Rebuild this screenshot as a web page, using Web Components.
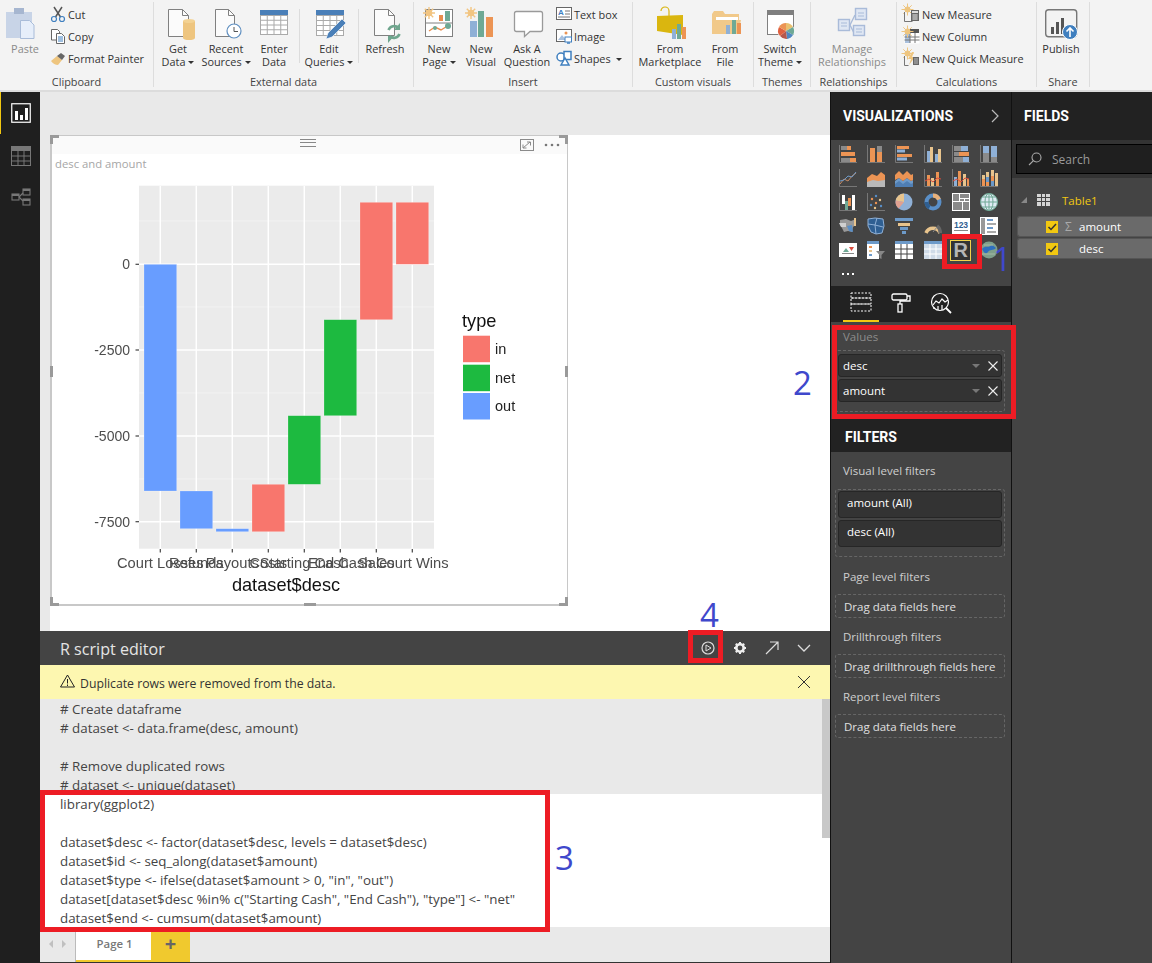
<!DOCTYPE html>
<html><head><meta charset="utf-8"><title>Power BI</title>
<style>
html,body{margin:0;padding:0;width:1152px;height:963px;overflow:hidden;background:#fff}
body{font-family:"Open Sans","Noto Sans",sans-serif}
</style></head>
<body>
<pbi-app>
  <pbi-ribbon slot="ribbon">
    <rb-group label="Clipboard" style="width:153px">
      <rb-big icon="paste" w="50" class="dis">Paste</rb-big>
      <rb-col>
        <rb-small icon="cut">Cut</rb-small>
        <rb-small icon="copy">Copy</rb-small>
        <rb-small icon="painter">Format Painter</rb-small>
      </rb-col>
    </rb-group>
    <rb-group label="External data" style="width:259px">
      <rb-big icon="getdata" w="48" caret>Get<br>Data</rb-big>
      <rb-big icon="recent" w="48" caret>Recent<br>Sources</rb-big>
      <rb-big icon="enter" w="48">Enter<br>Data</rb-big>
      <rb-sep></rb-sep>
      <rb-big icon="edit" w="56" caret>Edit<br>Queries</rb-big>
      <rb-sep></rb-sep>
      <rb-big icon="refresh" w="50">Refresh</rb-big>
    </rb-group>
    <rb-group label="Insert" style="width:218px">
      <rb-big icon="newpage" w="50" caret>New<br>Page</rb-big>
      <rb-big icon="newvisual" w="34">New<br>Visual</rb-big>
      <rb-big icon="ask" w="58">Ask A<br>Question</rb-big>
      <rb-col>
        <rb-small icon="textbox">Text box</rb-small>
        <rb-small icon="image">Image</rb-small>
        <rb-small icon="shapes" caret>Shapes</rb-small>
      </rb-col>
    </rb-group>
    <rb-group label="Custom visuals" style="width:120px">
      <rb-big icon="market" w="74">From<br>Marketplace</rb-big>
      <rb-big icon="file" w="36">From<br>File</rb-big>
    </rb-group>
    <rb-group label="Themes" style="width:56px">
      <rb-big icon="theme" w="52" caret>Switch<br>Theme</rb-big>
    </rb-group>
    <rb-group label="Relationships" style="width:85px">
      <rb-big icon="manage" w="82" class="dis">Manage<br>Relationships</rb-big>
    </rb-group>
    <rb-group label="Calculations" style="width:139px">
      <rb-col style="margin-left:7px">
        <rb-small icon="measure">New Measure</rb-small>
        <rb-small icon="column">New Column</rb-small>
        <rb-small icon="quick">New Quick Measure</rb-small>
      </rb-col>
    </rb-group>
    <rb-group label="Share" style="width:52px">
      <rb-big icon="publish" w="48">Publish</rb-big>
    </rb-group>
  </pbi-ribbon>
  <pbi-nav slot="nav"></pbi-nav>
  <pbi-center slot="center">
    <pbi-page>
      <r-visual title-text="desc and amount"></r-visual>
    </pbi-page>
    <r-editor></r-editor>
    <pbi-tabs></pbi-tabs>
  </pbi-center>
  <pbi-viz slot="viz"></pbi-viz>
  <pbi-fields slot="fields"></pbi-fields>
  <pbi-mark slot="over" x="942" y="234" w="40" h="35"></pbi-mark>
  <pbi-mark slot="over" x="832" y="325" w="184" h="94"></pbi-mark>
  <pbi-mark slot="over" x="40" y="790" w="510" h="142"></pbi-mark>
  <pbi-mark slot="over" x="688" y="630" w="35" h="33"></pbi-mark>
  <pbi-num slot="over" x="993" y="237">1</pbi-num>
  <pbi-num slot="over" x="793" y="361">2</pbi-num>
  <pbi-num slot="over" x="555" y="836">3</pbi-num>
  <pbi-num slot="over" x="700" y="593">4</pbi-num>
</pbi-app>
<script>
const sun=(x,y,c='#f2c582')=>`<g stroke="${c}" stroke-width="1.4" fill="none"><circle cx="${x}" cy="${y}" r="2.6" fill="${c}"/><path d="M${x} ${y-6}v12M${x-6} ${y}h12M${x-4.2} ${y-4.2}l8.4 8.4M${x-4.2} ${y+4.2}l8.4-8.4"/></g>`;
const R=(x,y,w,h,c)=>`<rect x="${x}" y="${y}" width="${w}" height="${h}" fill="${c}"/>`;
const page=(a,b,t,c)=>`<path d="M${a+.5} ${t+.5}h${b-a-7}l6 6v${c-t-7}H${a+.5}z" fill="#fbfbfb" stroke="#808080"/><path d="M${b-6.5} ${t+.5}v6h6" fill="none" stroke="#808080"/>`;
const tbl=(x,y,w,h,n,m)=>{let s=R(x,y,w,h,'#fff')+R(x,y,w,5,'#4a7fb8');for(let i=0;i<=n;i++){const px=x+.5+i*(w-1)/n;s+=`<path d="M${px} ${y+5}V${y+h}" stroke="#aaa"/>`}for(let j=0;j<=m;j++){const py=y+5.5+j*(h-6)/m;s+=`<path d="M${x} ${py}H${x+w}" stroke="#aaa"/>`}return s};
const BIG={
paste:`<path d="M1 5h9V2.5h8V5h9v26H1z" fill="#c8d4e7"/><rect x="9" y="1" width="10" height="6" fill="#a6b6d0"/><path d="M15.5 13.5h9l4.5 4.5v13.5H15.5z" fill="#e6eefa" stroke="#a9bcd9"/>`,
getdata:page(10,31,2,30)+R(25,14,12,17,'#eec57f')+`<ellipse cx="31" cy="14" rx="6" ry="2" fill="#f3d293"/><ellipse cx="31" cy="31" rx="6" ry="2" fill="#eec57f"/>`,
recent:page(9,29,2,30)+`<circle cx="28" cy="24" r="7" fill="#fff" stroke="#5f8fc0" stroke-width="1.2"/><path d="M28 20v4.5h4" fill="none" stroke="#555"/>`,
enter:tbl(6,3,28,25,4,4),
edit:tbl(7,3,28,26,4,4)+`<path d="M19 26l14-14 4 4-14 14-6 2z" fill="#4a7fb8" stroke="#fff" stroke-width=".6"/>`,
refresh:page(9,30,2,29)+`<g fill="none" stroke="#6fa68e" stroke-width="2.6"><path d="M23.5 23a6 6 0 0 1 10-2"/><path d="M34.5 27a6 6 0 0 1-10 2"/></g><path d="M35 16v7h-6zM23 36v-7h6z" fill="#6fa68e"/>`,
newpage:R(6.5,2.5,27,27,'#fff').replace('/>',' stroke="#808080"/>')+`<path d="M6 16h28" stroke="#808080"/>`+R(20,8,4,6,'#e98d4e')+R(26,4,5,10,'#6fa995')+`<path d="M10 24l6-4 6 3 8-5" fill="none" stroke="#e98d4e" stroke-width="1.4"/><circle cx="16" cy="21" r="2" fill="#6fa995"/><circle cx="29" cy="19" r="3" fill="#6fa995"/>`+sun(10,6),
newvisual:sun(10,6)+R(9,14,7,16,'#8fb0d6')+R(17,4,6,26,'#6fa995')+R(25,10,7,20,'#ec9454'),
ask:`<path d="M9.5 4.5h24a2 2 0 0 1 2 2v16a2 2 0 0 1-2 2H23l-5.5 5v-5H9.5a2 2 0 0 1-2-2v-16a2 2 0 0 1 2-2z" fill="#fff" stroke="#9a9a9a" stroke-width="1.3"/>`,
market:`<path d="M11 4a4 4 0 0 1 8 0v5" fill="none" stroke="#d9b50f" stroke-width="1.2"/><path d="M7 9l26-1v20l-26-4z" fill="#dab60f"/>`+R(22,22,4,10,'#8fb0d6')+R(27,17,4,15,'#6fa995')+R(32,20,4,12,'#ec9454'),
file:`<path d="M7 7l2-3h9l2 3h14v6l2 0-3 14H7z" fill="#f1c98a"/><path d="M11 10h22v3H11z" fill="#fff"/>`+R(21,18,4,9,'#8fb0d6')+R(27,13,4,14,'#6fa995')+R(32,16,4,11,'#ec9454'),
theme:R(7.5,3.5,26,24,'#fff').replace('/>',' stroke="#808080"/>')+R(7,3,27,5,'#7f7f7f')+`<circle cx="26" cy="24" r="8.5" fill="#fff"/><path d="M26 24V16a8 8 0 0 1 7 4z" fill="#e9c06f"/><path d="M26 24l7-4a8 8 0 0 1 0 8z" fill="#6fa995"/><path d="M26 24l7 4a8 8 0 0 1-6 4z" fill="#4f86c0"/><path d="M26 24l1 8a8 8 0 0 1-7-3z" fill="#b5574c"/><path d="M26 24l-6 5a8 8 0 0 1-1-9z" fill="#e0603f"/><path d="M26 24l-7-4a8 8 0 0 1 7-4z" fill="#ec9454"/>`,
manage:`<g fill="#dfe7f3" stroke="#a9bbd9" stroke-width="1.4"><path d="M18 18l5-10M18 18l4 8" fill="none"/><rect x="23.5" y="1.5" width="11" height="11"/><rect x="6.5" y="12.5" width="11" height="11"/><rect x="21.5" y="18.5" width="11" height="10"/></g><path d="M26 6h6M26 9h6M9 16h6M9 19h6M24 22h6M24 25h6" stroke="#a9bbd9"/>`,
publish:`<rect x="4.7" y="2.7" width="31" height="27" rx="3" fill="none" stroke="#777" stroke-width="1.4"/><g fill="#555">${R(10,20,3,7,'#555')}${R(15,15,3,12,'#555')}${R(20,11,3,16,'#555')}</g><circle cx="29" cy="25" r="7.5" fill="#3f7fbf" stroke="#fff"/><path d="M29 30v-9M25.5 24.5l3.5-3.5 3.5 3.5" fill="none" stroke="#fff" stroke-width="1.6"/>`
};
const sm=(x,y)=>sun(x,y,'#eec57f').replace(/stroke-width="1.4"/,'stroke-width="1"');
const SMALL={
cut:`<g fill="none"><path d="M4 1l6.5 10M12 1L5.5 11" stroke="#555" stroke-width="1.5"/><circle cx="4" cy="13" r="2.5" stroke="#3f7fbf" stroke-width="1.2"/><circle cx="12" cy="13" r="2.5" stroke="#3f7fbf" stroke-width="1.2"/></g>`,
copy:`<path d="M1.5 1.5h6l2 2V12h-8z" fill="#fff" stroke="#666"/><path d="M6.5 5.5h5l3 3v7h-8z" fill="#fff" stroke="#666"/><path d="M8 9h5M8 11h5M8 13h5" stroke="#3f7fbf"/>`,
painter:`<path d="M1 11l6-5 5 4-4 5q-4 0-7-4z" fill="#eec57f"/><path d="M7 6l5 4 3-4-4-3z" fill="#666"/>`,
textbox:`<rect x=".5" y="1.5" width="15" height="12" fill="#fff" stroke="#666"/><text x="2" y="9" font-family="Liberation Sans" font-size="8" font-weight="700" fill="#3f7fbf">A</text><path d="M9 5h5M9 8h5M2 11h12" stroke="#777"/>`,
image:`<rect x=".5" y="1.5" width="15" height="12" fill="#fff" stroke="#666"/><path d="M2 12l4-5 4 5z" fill="#a9c0de"/><circle cx="10" cy="5" r="1.5" fill="#ec9454"/><rect x="9" y="9" width="6.5" height="5" fill="#fff" stroke="#3f7fbf"/><path d="M11 15h3" stroke="#3f7fbf" stroke-width="1.5"/>`,
shapes:`<g fill="#fff" stroke="#3f7fbf" stroke-width="1.5"><circle cx="5" cy="7" r="4"/><rect x="8" y="1.5" width="7" height="8"/><path d="M5 15l4-7 4 7z"/></g>`,
measure:`${sm(3.5,3.5)}<path d="M.5 6v9.5h8" fill="none" stroke="#777"/>${R(7,4,8,11,'#666')}${R(8,5,6,2,'#ddd')}<path d="M8 9h6M8 11h6M8 13h6M10 8v6M12 8v6" stroke="#ddd" stroke-width=".7"/>`,
column:`${R(.5,5,15,10.5,'#fff')}${R(1,5,5,10,'#a9c0de')}${R(6,1,9,4,'#555')}<path d="M.5 9h15M.5 12h15M6 5v10M11 5v10" stroke="#777" fill="none"/>${sm(3.5,3.5)}`,
quick:`${sm(3.5,3.5)}<path d="M.5 6v9.5h4" fill="none" stroke="#777"/><path d="M8 2L4 9h3l-2 6 6-8H8l2-5z" fill="#eec57f"/>${R(9,7,6,8,'#666')}<path d="M10 9h4M10 11h4M10 13h4" stroke="#ddd" stroke-width=".7"/>`
};
const O='#ec9454',B='#8fb0d6',S='#e8c48d',G='#8a8a8a',W='#fff',D='#6d9ac9',T='#6fa995',A='#5a8fc7';
const ax=`<path d="M.5 0v17.5H18" fill="none" stroke="#777"/>`;
const VIZ=[
ax+R(2,1,6,4,G)+R(8,1,4,4,O)+R(2,7,6,4,O)+R(8,7,8,4,O)+R(2,13,9,4,G)+R(11,13,6,4,O),
ax+R(3,7,5,10,O)+R(3,3,5,4,O)+R(10,1,5,6,G)+R(10,7,5,10,O),
ax+R(2,1,12,3,O)+R(2,4.5,8,3,B)+R(2,9,15,3,O)+R(2,12.5,10,3,B),
ax+R(3,6,3,11,B)+R(6,2,3,15,S)+R(11,9,3,8,B)+R(14,4,3,13,S),
ax+R(2,1,7,5,G)+R(9,1,7,5,B)+R(2,7,5,4,G)+R(7,7,10,4,O)+R(2,12,9,5,G)+R(11,12,6,5,B),
ax+R(3,1,6,7,B)+R(3,8,6,9,G)+R(11,1,6,11,B)+R(11,12,6,5,G),
ax+`<path d="M1 15l4-5 4 2 4-5 4-3" fill="none" stroke="#c98a60"/><path d="M1 12l4-1 4-4 4 1 4-5" fill="none" stroke="#6d9ac9"/>`,
`<path d="M0 18V9l5-4 5 2 4-4 4 3v12z" fill="${O}"/><path d="M0 18v-5l6-2 5 1 7-1v7z" fill="#b9b9b9"/>`,
`<path d="M0 18V12l4-3 4 3 4-3 4 3 2-1v7z" fill="${D}"/><path d="M0 11V6l4-4 4 4 4-4 4 4 2-1v6l-2 1-4-3-4 3-4-3z" fill="${O}"/><path d="M0 15l4-3 4 3 4-3 4 3 2-1v4H0z" fill="#4f7eb3"/>`,
ax+R(3,6,3,11,O)+R(7,9,3,8,S)+R(12,3,3,14,O)+`<path d="M1 12l4-2 4 3 4-4 4 1" fill="none" stroke="#d94c3d"/>`,
ax+R(2,8,3,9,B)+R(6,2,3,15,O)+R(11,5,3,12,S)+R(15,10,2,7,O)+`<path d="M1 12l4-2 4 3 4-4 4 1" fill="none" stroke="#d94c3d"/>`,
ax+R(2,6,3,4,S)+R(2,10,3,7,O)+R(6,3,3,5,S)+R(6,8,3,5,D)+R(6,13,3,4,O)+R(11,1,3,6,S)+R(11,7,3,5,O)+R(11,12,3,5,D)+R(15,4,3,13,S),
ax+R(3,2,3,9,W)+R(6,8,3,9,T)+R(9,5,3,8,O)+R(13,2,3,15,W),
ax+`<g fill="#c98a60"><circle cx="5" cy="6" r="1.2" fill="${O}"/><circle cx="9" cy="3" r="1.2" fill="${A}"/><circle cx="4" cy="12" r="1.2" fill="${A}"/><circle cx="9" cy="10" r="1.2" fill="${O}"/><circle cx="13" cy="7" r="1.2" fill="${S}"/><circle cx="14" cy="13" r="1.2" fill="${A}"/><circle cx="8" cy="15" r="1.2" fill="${S}"/></g>`,
`<circle cx="9" cy="9" r="8.5" fill="${B}"/><path d="M9 9V.5a8.5 8.5 0 0 0-8.3 7z" fill="${S}"/><path d="M9 9L.7 7.5a8.5 8.5 0 0 0 3 8z" fill="#e0a090"/>`,
`<circle cx="9" cy="9" r="6.5" fill="none" stroke="${A}" stroke-width="4"/><path d="M9 2.5a6.5 6.5 0 0 1 6 4" fill="none" stroke="#e7b07a" stroke-width="4"/><path d="M2.5 9a6.5 6.5 0 0 0 3 5.5" fill="none" stroke="#2f5f92" stroke-width="4"/>`,
R(0,0,18,18,W)+R(1,1,6,7,G)+R(8,1,9,4,G)+R(8,6,4,2,G)+R(13,6,4,2,G)+R(1,9,9,8,G)+R(11,9,6,8,G),
`<circle cx="9" cy="9" r="8.5" fill="#dfeaf3" stroke="${T}"/><path d="M.5 9h17M9 .5v17M3 4h12M3 14h12" stroke="${T}"/><ellipse cx="9" cy="9" rx="4" ry="8.5" fill="none" stroke="${T}"/>`,
`<path d="M1 3l6-1 5 2 5-2v5l-3 3-1 5-4-1-4 1-2-4-2-3z" fill="#999"/><path d="M8 9l5-1 1 7-4-1z" fill="${A}"/><path d="M0 6h7v4H2z" fill="#d0d0d0"/><path d="M15 1h2v8h-2z" fill="${S}"/>`,
`<path d="M1 2l7-1 8 1 1 7-2 7-6 1-5-2-3-6z" fill="#2f5f92" stroke="${B}"/><path d="M1 7l7 1 2-7M8 8l1 9M8 8l8 2" stroke="${B}" fill="none"/>`,
R(0,1,18,3,D)+R(3,6,12,3,S)+R(5,10,8,3,D)+R(7,14,4,3,D),
`<path d="M2 16a7.5 7.5 0 0 1 14 0" fill="none" stroke="${S}" stroke-width="3.5"/><path d="M13 9a7.5 7.5 0 0 1 3 7" fill="none" stroke="#666" stroke-width="3.5"/><path d="M9 15l4-5" stroke="#888"/>`,
R(0,1,18,16,W)+`<text x="9" y="11" text-anchor="middle" font-family="Liberation Sans" font-size="8.5" font-weight="700" fill="#2f5f92">123</text>`+R(2,13,14,1,'#888'),
R(0,0,18,18,W)+R(1,1,4,16,'#999')+R(7,2,6,2,D)+R(7,6,9,2,'#aaa')+R(7,10,6,2,D)+R(7,14,9,2,'#aaa'),
R(0,2,18,14,W)+`<path d="M4 11l3-4 3 4z" fill="${T}"/><path d="M10 6h5l-2.5 4z" fill="#d94c3d"/>`+R(3,12,12,1,'#888'),
R(0,0,12,18,W)+R(0,0,12,3,D)+R(2,5,3,2,O)+R(2,9,3,2,S)+R(2,13,3,2,D)+`<path d="M9 10h9l-3.5 4v4l-2-1v-3z" fill="#888"/>`,
R(0,0,18,18,W)+R(0,0,18,3,D)+`<path d="M6 3v15M12 3v15M0 8h18M0 13h18" stroke="#444" stroke-width="1"/>`,
R(0,0,18,18,'#cfdbe8')+R(0,0,18,3,D)+`<path d="M6 3v15M12 3v15M0 8h18M0 13h18" stroke="#fff" stroke-width="1"/>`,
null,
`<circle cx="9" cy="9" r="8.5" fill="#7f9f8a"/><path d="M2 8c3-4 6-1 8-3s4 0 6 2c-3 3-6 1-8 4s-4 1-6-3z" fill="#2e6fbe"/><path d="M4 4h9M2 13h13" stroke="#a5b8a5"/>`
];
function tpl(css,html){return `<style>${css}</style>${html}`}
class Base extends HTMLElement{
  constructor(){super();this.attachShadow({mode:'open'})}
  render(css,html){this.shadowRoot.innerHTML=tpl(css,html)}
}
customElements.define('pbi-app',class extends Base{connectedCallback(){this.render(`
:host{display:grid;position:relative;width:1152px;height:963px;grid-template-columns:40px 790px 182px 140px;grid-template-rows:92px 871px;font-family:"Open Sans","Noto Sans",sans-serif;overflow:hidden}
.r{grid-column:1/-1}
`,`<div class="r"><slot name="ribbon"></slot></div><slot name="nav"></slot><slot name="center"></slot><slot name="viz"></slot><slot name="fields"></slot><slot name="over"></slot>`)}});
customElements.define('pbi-ribbon',class extends Base{connectedCallback(){this.render(`
:host{display:flex;height:92px;box-sizing:border-box;background:#f3f3f3;border-bottom:2px solid #dcdcdc;color:#333;font-size:10.9px}
`,`<slot></slot>`)}});
customElements.define('rb-group',class extends Base{connectedCallback(){this.render(`
:host{display:grid;grid-template-rows:75px 15px;position:relative;flex:none;margin-right:1px}
:host::after{content:"";position:absolute;right:-1px;top:2px;bottom:3px;width:1px;background:#dddddd}
.c{display:flex;align-items:flex-start;min-width:0}
.l{text-align:center;line-height:14px;font-size:10.9px;color:#444;white-space:nowrap}
`,`<div class="c"><slot></slot></div><div class="l">${this.getAttribute('label')}</div>`)}});
customElements.define('rb-big',class extends Base{connectedCallback(){const w=this.getAttribute('w'),dis=this.classList.contains('dis');this.render(`
:host{display:flex;flex-direction:column;align-items:center;width:${w}px;flex:none;padding-top:7px;color:${dis?'#8a8a8a':'#333'}}
svg{display:block;width:40px;height:34px;margin:0 -20px 1px;overflow:visible}
.t{text-align:center;line-height:13px;white-space:nowrap}
.c{display:inline-block;width:0;height:0;border:3px solid transparent;border-top:3px solid #333;border-bottom:0;margin-left:3px;vertical-align:2px}
`,`<svg viewBox="0 0 40 34">${BIG[this.getAttribute('icon')]}</svg><div class="t"><slot></slot>${this.hasAttribute('caret')?'<span class="c"></span>':''}</div>`)}});
customElements.define('rb-col',class extends Base{connectedCallback(){this.render(`:host{display:flex;flex-direction:column;padding-top:3px}`,`<slot></slot>`)}});
customElements.define('rb-sep',class extends Base{connectedCallback(){this.render(`:host{display:block;flex:none;width:1px;height:54px;margin:9px 1px 0;background:#dcdcdc}`,``)}});
customElements.define('rb-small',class extends Base{connectedCallback(){this.render(`
:host{display:flex;align-items:center;height:22px;white-space:nowrap}
svg{width:16px;height:16px;margin-right:2px;flex:none;overflow:visible}
.c{display:inline-block;width:0;height:0;border:3px solid transparent;border-top:3px solid #333;border-bottom:0;margin-left:5px;vertical-align:2px}
`,`<svg viewBox="0 0 16 16">${SMALL[this.getAttribute('icon')]}</svg><span><slot></slot>${this.hasAttribute('caret')?'<span class="c"></span>':''}</span>`)}});
customElements.define('pbi-nav',class extends Base{connectedCallback(){this.render(`
:host{display:flex;flex-direction:column;background:#1f1f1f}
.i{height:42px;display:flex;align-items:center;justify-content:center;box-sizing:border-box;border-left:1px solid transparent}
.a{border-left-color:#f2c811;margin-bottom:1px}
svg{width:20px;height:20px}
`,`<div class="i a"><svg viewBox="0 0 20 20"><rect x=".75" y=".75" width="18.5" height="18.5" fill="none" stroke="#fff" stroke-width="1.2"/><path d="M4 8h3v9H4zM9 12h3v5H9zM14 5h3v12h-3z" fill="#fff"/></svg></div>
<div class="i"><svg viewBox="0 0 20 20"><rect x=".5" y=".5" width="19" height="19" fill="none" stroke="#777"/><rect y="0" width="20" height="5" fill="#777"/><path d="M0 10h20M0 15h20M7 5v15M13 5v15" stroke="#777"/></svg></div>
<div class="i"><svg viewBox="0 0 20 20"><g fill="none" stroke="#777" stroke-width="1.1"><rect x="1" y="6" width="7" height="6"/><rect x="12" y="1" width="7" height="6"/><rect x="12" y="11" width="7" height="6"/><path d="M8 9l4-4M8 9l4 4"/></g><path d="M12 1h7v2h-7zM1 6h7v2H1zM12 11h7v2h-7z" fill="#777"/></svg></div>`)}});
customElements.define('pbi-center',class extends Base{connectedCallback(){this.render(`
:host{display:flex;flex-direction:column;background:#e9e9e9;height:871px}
`,`<slot></slot>`)}});
customElements.define('pbi-page',class extends Base{connectedCallback(){this.render(`
:host{display:block;height:496px;margin:43px 0 0 10px;background:#fff}
`,`<slot></slot>`)}});
customElements.define('r-visual',class extends Base{connectedCallback(){
const xs=[160.3,196.3,232.3,268.3,304.3,340.3,376.3,412.3];
const names=['Court Losses','Refunds','Payouts','Costs','Starting Cash','End Cash','Sales','Court Wins'];
const bars=[[144,264.3,491,'#689dff'],[180,491,528.7,'#689dff'],[216,528.7,531.7,'#689dff'],[252,484.3,531.7,'#f8766d'],[288,415.7,484.3,'#1dba40'],[324,319.7,415.7,'#1dba40'],[360,202.3,319.7,'#f8766d'],[396,202.3,264.3,'#f8766d']];
let g='';
[221,307,393,479].forEach(y=>g+=`<path d="M139 ${y}H434" stroke="#f4f4f4" stroke-width=".8"/>`);
[264.3,350,436,521.7].forEach(y=>g+=`<path d="M139 ${y}H434" stroke="#fff" stroke-width="1.5"/><path d="M135.5 ${y}H139" stroke="#444" stroke-width="1.2"/>`);
xs.forEach(x=>g+=`<path d="M${x} 186V549" stroke="#fff" stroke-width="1.5"/><path d="M${x} 549v3.5" stroke="#444" stroke-width="1.2"/>`);
let b=bars.map(v=>`<rect x="${v[0]}" y="${v[1]}" width="32.7" height="${v[2]-v[1]}" fill="${v[3]}" stroke="#fff" stroke-opacity=".35" stroke-width=".6"/>`).join('');
let yl=[['0',264.3],['-2500',350],['-5000',436],['-7500',521.7]].map(a=>`<text x="130" y="${a[1]+5}" text-anchor="end" class="tk">${a[0]}</text>`).join('');
let xl=xs.map((x,i)=>`<text x="${x}" y="568" text-anchor="middle" class="tk x">${names[i]}</text>`).join('');
let leg=[[335.7,'#f8766d','in',354],[364.7,'#1dba40','net',383],[393,'#689dff','out',411]].map(a=>`<rect x="463" y="${a[0]}" width="27" height="26.5" fill="${a[1]}"/><text x="495" y="${a[3]}" class="lg">${a[2]}</text>`).join('');
this.render(`
:host{display:block;position:relative;width:518px;height:471px;box-sizing:border-box;border:1px solid #c8c8c8;border-width:1px 1px 2px 2px;background:#fff;font-size:11.3px;color:#a6a6a6}
.h{height:18px;background:#fafafa;display:flex;align-items:center;justify-content:flex-end;gap:10px;padding-right:7px}
.t{height:21px;line-height:20px;padding-left:3px;white-space:nowrap}
svg.c{display:block;width:516px;height:425px;margin-left:-1px;filter:blur(.35px)}
.tk{font:14px "Liberation Sans",sans-serif;fill:#4d4d4d}
.x{font-size:14.7px}
.lg{font:14.5px "Liberation Sans",sans-serif;fill:#222}
.ax{font:18.2px "Liberation Sans",sans-serif;fill:#111}
.m{position:absolute;background:#9a9a9a}
.grip{position:absolute;left:248px;top:3px;width:16px;height:6px;border-top:1px solid #888;border-bottom:1px solid #888}
.grip::after{content:"";position:absolute;left:0;right:0;top:2px;height:1px;background:#888}
`,`<div class="h"><svg width="14" height="12" viewBox="0 0 14 12" fill="none" stroke="#8a8a8a"><rect x=".5" y=".5" width="13" height="11"/><path d="M3 9l7-6M7 3h3.5v3.5M3 5.5V9h3.5"/></svg><svg width="16" height="4" viewBox="0 0 16 4" fill="#777"><circle cx="2" cy="2" r="1.3"/><circle cx="8" cy="2" r="1.3"/><circle cx="14" cy="2" r="1.3"/></svg></div>
<div class="grip"></div>
<div class="t">${this.getAttribute('title-text')}</div>
<svg class="c" viewBox="51 175 516 425"><rect x="139" y="185.7" width="295" height="363" fill="#ebebeb"/>${g}${b}${yl}${xl}<text x="286" y="591" text-anchor="middle" class="ax">dataset$desc</text><text x="462" y="327" class="ax">type</text>${leg}</svg>
<i class="m" style="left:-2px;top:-1px;width:9px;height:3px"></i><i class="m" style="left:-2px;top:-1px;width:3px;height:9px"></i>
<i class="m" style="left:-2px;bottom:-2px;width:9px;height:3px"></i><i class="m" style="left:-2px;bottom:-2px;width:3px;height:9px"></i>
<i class="m" style="right:-1px;bottom:-2px;width:9px;height:3px"></i><i class="m" style="right:-1px;bottom:-2px;width:3px;height:9px"></i>
<i class="m" style="right:-1px;top:-1px;width:9px;height:3px"></i><i class="m" style="right:-1px;top:-1px;width:3px;height:9px"></i>
<i class="m" style="left:-2px;top:230px;width:3px;height:11px"></i><i class="m" style="right:-1px;top:230px;width:3px;height:11px"></i><i class="m" style="left:252px;bottom:-2px;width:12px;height:3px"></i>`)}});
customElements.define('r-editor',class extends Base{connectedCallback(){
const ro=['# Create dataframe','# dataset <- data.frame(desc, amount)','','# Remove duplicated rows','# dataset <- unique(dataset)'];
const rw=['library(ggplot2)','','dataset$desc <- factor(dataset$desc, levels = dataset$desc)','dataset$id <- seq_along(dataset$amount)','dataset$type <- ifelse(dataset$amount > 0, "in", "out")','dataset[dataset$desc %in% c("Starting Cash", "End Cash"), "type"] <- "net"','dataset$end <- cumsum(dataset$amount)'];
const esc=s=>s.replace(/&/g,'&amp;').replace(/</g,'&lt;')||' ';
const ln=a=>a.map(s=>`<div class="l">${esc(s)}</div>`).join('');
this.render(`
:host{display:block;flex:none}
.hd{height:34px;background:#444;color:#e4e4e4;display:flex;align-items:center;padding-left:20px;font-size:16.1px}
.hd span{flex:1;padding-top:1px}
.hd svg{display:block;width:32px;height:20px}
.hd .ic{display:flex;margin-right:10px}
.warn{height:34px;background:#fdf7b0;color:#333;display:flex;align-items:center;padding-left:20px;font-size:12.25px;gap:5px}
.warn span{flex:1;padding-top:3px}
.warn svg.t{margin-bottom:3px}
.warn svg.x{margin-right:20px}
.code{display:flex;height:228px;font-size:13.35px;color:#444;line-height:19px}
.txt{flex:1;white-space:pre}
.g{background:#e9e9e9;height:95px}
.w{background:#fff;height:133px}
.l{padding:1px 0 0 20px;height:19px;box-sizing:border-box}
.sb{width:8px;background:linear-gradient(#c8c8c8 139px,#fff 139px)}
`,`<div class="hd"><span>R script editor</span><div class="ic">
<svg viewBox="0 0 32 20"><circle cx="16" cy="10" r="6" fill="none" stroke="#ddd" stroke-width="1.2"/><path d="M14 7l5 3-5 3z" fill="none" stroke="#ddd"/></svg>
<svg viewBox="0 0 32 20"><circle cx="16" cy="10" r="3.7" fill="none" stroke="#eee" stroke-width="2.6"/><path d="M16 4v3M16 13v3M10 10h3M19 10h3M11.8 5.8l2 2M18.2 12.2l2 2M11.8 14.2l2-2M18.2 7.8l2-2" stroke="#eee" stroke-width="2"/></svg>
<svg viewBox="0 0 32 20"><path d="M10 16L22 4M14 4h8v8" fill="none" stroke="#ddd" stroke-width="1.2"/></svg>
<svg viewBox="0 0 32 20"><path d="M10 7l6 6 6-6" fill="none" stroke="#ddd" stroke-width="1.3"/></svg>
</div></div>
<div class="warn"><svg class="t" width="15" height="14" viewBox="0 0 15 14" fill="none" stroke="#222"><path d="M7.5 1L14.5 13H.5z"/><path d="M7.5 5v4.5M7.5 10.5v1.5"/></svg><span>Duplicate rows were removed from the data.</span><svg class="x" width="12" height="12" viewBox="0 0 12 12"><path d="M0 0l12 12M12 0L0 12" stroke="#333"/></svg></div>
<div class="code"><div class="txt"><div class="g">${ln(ro)}</div><div class="w">${ln(rw)}</div></div><div class="sb"></div></div>`)}});
customElements.define('pbi-tabs',class extends Base{connectedCallback(){this.render(`
:host{display:flex;flex:1;background:#e9e9e9;border-bottom:1px solid #333;box-sizing:border-box}
.nav{width:36px;display:flex;align-items:center;justify-content:center;gap:9px;padding-bottom:2px;border-right:1px solid #bbb;box-sizing:border-box}
.nav i{width:0;height:0;border:4px solid transparent}
.p{border-right-color:#c0c0c0!important;border-left:0!important}
.n{border-left-color:#c0c0c0!important;border-right:0!important}
.tab{width:75px;background:#fff;border-bottom:2px solid #f0c92e;display:flex;align-items:center;justify-content:center;font-size:11.4px;font-weight:600;color:#777;padding-left:2px;box-sizing:border-box}
.add{width:39px;background:#f0c92e;display:flex;align-items:center;justify-content:center;font-size:20px;font-weight:700;color:#666;line-height:1;padding-bottom:2px;box-sizing:border-box}
`,`<div class="nav"><i class="p"></i><i class="n"></i></div><div class="tab">Page 1</div><div class="add">+</div>`)}});
customElements.define('viz-chip',class extends Base{connectedCallback(){const rm=this.hasAttribute('rm');this.render(`
:host{display:flex;align-items:center;box-sizing:border-box;margin:0 2px 2px;height:${rm?'23px':'27px'};background:#333;border:1px solid #262626;border-radius:3px;color:#fff;font-size:11.5px;padding-left:${rm?'4px':'8px'};padding-right:3px;padding-bottom:${rm?'0':'3px'}}
span{flex:1}
i{width:0;height:0;border:4px solid transparent;border-top:4px solid #777;border-bottom:0;margin-right:8px}
`,`<span><slot></slot></span>${rm?'<i></i><svg width="10" height="10" viewBox="0 0 10 10"><path d="M.5.5l9 9M9.5.5l-9 9" stroke="#eee" stroke-width="1.1"/></svg>':''}`)}});
customElements.define('viz-well',class extends Base{connectedCallback(){const p=this.hasAttribute('empty');this.render(`
:host{display:block}
.l{height:37px;box-sizing:border-box;padding:${this.getAttribute('lp')||'11px'} 0 0 12px;font-size:11.5px;color:#cfcfcf;line-height:16px}
.b{margin:0 6px 0 4px;border:1px dashed #666;border-radius:3px;box-sizing:border-box;height:${this.getAttribute('bh')||'24px'};padding-top:${p?'0':'1px'};color:#e0e0e0;font-size:11.5px;line-height:24px;padding-left:${p?'8px':'0'}}
`,`<div class="l">${this.getAttribute('label')}</div><div class="b"><slot></slot></div>`)}});
customElements.define('pbi-viz',class extends Base{connectedCallback(){
const cells=VIZ.map((s,i)=>{if(s===null)return `<div class="cell r"><span>R</span></div>`;return `<div class="cell"><svg viewBox="0 0 18 18">${s}</svg></div>`}).join('');
this.shadowRoot.innerHTML=tpl(`
:host{display:flex;flex-direction:column;background:#444;border-left:1px solid #111;border-right:1px solid #111;box-sizing:border-box;color:#fff;height:871px}
.head{height:48px;flex:none;background:#222;display:flex;align-items:center;justify-content:space-between;padding:0 12px;box-sizing:border-box;font:700 14px Roboto,sans-serif}
.grid{height:146px;flex:none;display:grid;grid-template-columns:repeat(6,28.2px);grid-auto-rows:24px;padding:2px 0 0 3px;box-sizing:border-box;align-items:center;justify-items:center}
.cell{width:18px;height:18px}
.cell svg{display:block;width:18px;height:18px;overflow:visible}
.r{width:21px;height:21px;box-sizing:border-box;border:1.5px solid #f2d24a;background:#333;display:flex;align-items:center;justify-content:center;font:700 20px "Liberation Sans",sans-serif;color:#b5b5b5}
.more{grid-column:1;color:#fff;display:flex;gap:3px}
.more i{width:2px;height:2px;background:#fff}
.tabs{height:36px;flex:none;background:#222;display:flex;padding-left:12px;box-sizing:border-box;align-items:stretch}
.tb{width:36px;margin-right:4px;display:flex;align-items:center;justify-content:center;box-sizing:border-box;padding-bottom:2px}
.on{border-bottom:2px solid #f2c811}
.vals{height:97px;flex:none}
.vl{height:28px;box-sizing:border-box;padding:7px 0 0 12px;font-size:11.5px;color:#8c8c8c;line-height:16px}
.well{margin:0 6px 0 4px;border:1px dashed #666;border-radius:3px;height:62px;box-sizing:border-box;padding-top:3px}
.fh{height:33px;flex:none;background:#222;display:flex;align-items:center;padding:2px 0 0 14px;font:700 14px Roboto,sans-serif;box-sizing:border-box}
`,`<div class="head"><span>VISUALIZATIONS</span><svg width="8" height="14" viewBox="0 0 8 14"><path d="M1 1l6 6-6 6" fill="none" stroke="#bbb" stroke-width="1.2"/></svg></div>
<div class="grid">${cells}<div class="more"><i></i><i></i><i></i></div></div>
<div class="tabs"><div class="tb on"><svg width="22" height="20" viewBox="0 0 22 20" fill="none" stroke="#fff" stroke-dasharray="2 1.5"><rect x="1" y="1" width="20" height="5"/><rect x="1" y="6" width="20" height="6"/><rect x="1" y="12" width="20" height="7"/></svg></div>
<div class="tb"><svg width="20" height="20" viewBox="0 0 20 20" fill="none" stroke="#fff" stroke-width="1.3"><rect x="1" y="1" width="15" height="6" rx="1.5"/><path d="M16 3h3v5H9v3"/><rect x="7" y="11" width="4" height="8"/></svg></div>
<div class="tb"><svg width="22" height="22" viewBox="0 0 22 22" fill="none" stroke="#fff" stroke-width="1.2"><circle cx="10" cy="10" r="8.5"/><path d="M16 16l5 5" stroke-width="1.8"/><path d="M3 13l3-4 3 2 3-4 3 3 3-2M4 15v2M8 14v4M12 13v5"/></svg></div></div>
<div class="vals"><div class="vl">Values</div><div class="well"><viz-chip rm>desc</viz-chip><viz-chip rm>amount</viz-chip></div></div>
<div class="fh">FILTERS</div>
<viz-well label="Visual level filters" bh="68px"><viz-chip>amount (All)</viz-chip><viz-chip>desc (All)</viz-chip></viz-well>
<viz-well label="Page level filters" lp="12px" empty>Drag data fields here</viz-well>
<viz-well label="Drillthrough filters" lp="12px" empty style="margin-top:-1px">Drag drillthrough fields here</viz-well>
<viz-well label="Report level filters" lp="12px" empty style="margin-top:-1px">Drag data fields here</viz-well>`)}});
customElements.define('field-row',class extends Base{connectedCallback(){this.render(`
:host{display:flex;align-items:center;height:21px;margin:0 0 1px 5px;background:#6a6a6a;border-radius:3px 0 0 3px;color:#fff;font-size:11.5px;padding-left:28px;box-sizing:border-box;border:1px solid #555;border-right:0}
.cb{width:12px;height:12px;background:#f2c811;display:flex;align-items:center;justify-content:center;flex:none}
.s{width:21px;text-align:center;color:#aaa;font-size:12px;flex:none}
`,`<div class="cb"><svg width="10" height="10" viewBox="0 0 10 10"><path d="M1.5 5l2.5 2.5 5-5.5" fill="none" stroke="#333" stroke-width="1.5"/></svg></div><div class="s">${this.getAttribute('sig')||''}</div><span><slot></slot></span>`)}});
customElements.define('pbi-fields',class extends Base{connectedCallback(){this.render(`
:host{display:flex;flex-direction:column;background:#444;height:871px;color:#fff;overflow:hidden}
.head{height:48px;flex:none;background:#222;display:flex;align-items:center;padding-left:12px;font:700 14px Roboto,sans-serif;box-sizing:border-box}
.sw{height:38px;flex:none;background:#333;padding:4px 0 0 4px;box-sizing:border-box}
.s{height:30px;box-sizing:border-box;background:#1f1f1f;border:1px solid #000;border-right:0;display:flex;align-items:center;padding-left:11px;gap:10px;font-size:12px;color:#9a9a9a;margin-right:-4px}
.t{height:38px;flex:none;display:flex;align-items:center;color:#f2c811;font-size:11.5px;padding:6px 0 0 9px;box-sizing:border-box}
.t i{width:0;height:0;border:solid transparent;border-width:0 0 6px 6px;border-bottom-color:#888;margin-right:10px}
.t svg{margin-right:12px}
`,`<div class="head">FIELDS</div><div class="sw"><div class="s"><svg width="14" height="14" viewBox="0 0 14 14" fill="none" stroke="#aaa" stroke-width="1.1"><circle cx="8.5" cy="5.5" r="4.5"/><path d="M5.2 8.8L1 13"/></svg>Search</div></div>
<div class="t"><i></i><svg width="13" height="12" viewBox="0 0 13 12"><rect width="13" height="12" fill="#d5d5d5"/><path d="M4.5 0v12M8.5 0v12M0 3.5h13M0 7.5h13" stroke="#444"/></svg>Table1</div>
<field-row sig="Σ">amount</field-row><field-row>desc</field-row>`)}});
customElements.define('pbi-mark',class extends Base{connectedCallback(){const g=n=>this.getAttribute(n);this.render(`
:host{position:absolute;left:${g('x')}px;top:${g('y')}px;width:${g('w')}px;height:${g('h')}px;box-sizing:border-box;border:5px solid #ed1c24;pointer-events:none}
`,``)}});
customElements.define('pbi-num',class extends Base{connectedCallback(){const g=n=>this.getAttribute(n);this.render(`
:host{position:absolute;left:${g('x')}px;top:${g('y')}px;color:#3f48cc;font-size:33px;line-height:44px;font-family:"Open Sans",sans-serif}
`,`<slot></slot>`)}});
</script>
</body></html>
